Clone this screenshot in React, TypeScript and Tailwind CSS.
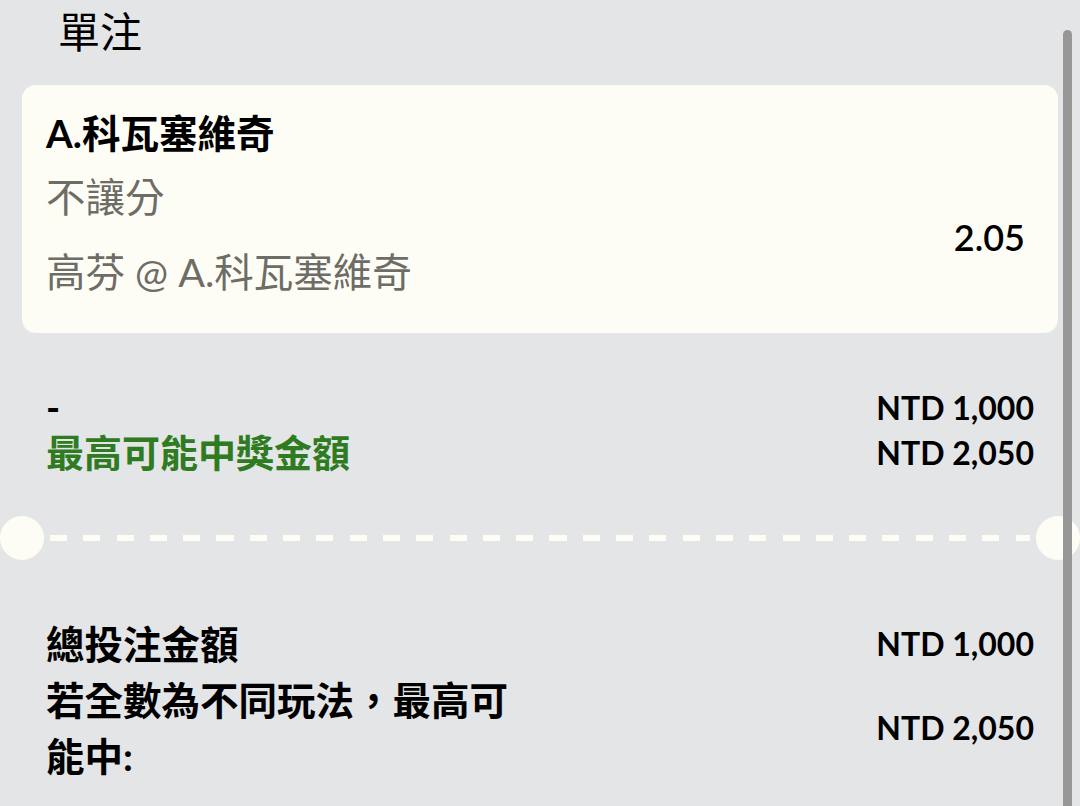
import React from "react"

const font = "font-['Lato','Noto_Sans_CJK_TC',sans-serif]"

const Ticket = () => (
  <div className="mx-[22px] mt-[21px] rounded-[14px] bg-[#fefdf5] pt-[24px] pb-[37px] pl-[24px] pr-[33px]">
    <div className="text-[38.5px] font-bold leading-[48px] text-black">A.科瓦塞維奇</div>
    <div className="mt-[16px] flex items-center justify-between">
      <div className="text-[39.5px] leading-[48px] text-[#6d6c66]">
        <div>不讓分</div>
        <div className="mt-[27px]">高芬 @ A.科瓦塞維奇</div>
      </div>
      <div className="mt-[4px] text-[36px] font-semibold leading-[48px] text-black">2.05</div>
    </div>
  </div>
)

const Divider = () => (
  <div className="mt-[41px] flex items-center">
    <div className="h-[44px] w-[44px] shrink-0 rounded-full bg-[#fefdf5]" />
    <div className="mx-[6px] h-[6px] flex-1 bg-[repeating-linear-gradient(90deg,#fefdf5_0_17px,transparent_17px_33.3px)]" />
    <div className="h-[44px] w-[44px] shrink-0 rounded-full bg-[#fefdf5]" />
  </div>
)

export default function App() {
  return (
    <div className={`relative h-[806px] w-[1080px] overflow-hidden bg-[#e4e5e7] ${font}`}>
      <div className="flex h-[64px] items-center pl-[58px] text-[42px] leading-none text-black">單注</div>
      <Ticket />

      <div className="mt-[52px] px-[46px] text-[38px] font-bold leading-[45px]">
        <div className="flex justify-between">
          <span className="text-black">-</span>
          <span className="text-[32px] text-black">NTD 1,000</span>
        </div>
        <div className="flex justify-between">
          <span className="text-[#2f7b21]">最高可能中獎金額</span>
          <span className="text-[32px] text-black">NTD 2,050</span>
        </div>
      </div>

      <Divider />

      <div className="mt-[56px] px-[46px] text-[38.5px] font-bold leading-[56px] text-black">
        <div className="flex justify-between">
          <span>總投注金額</span>
          <span className="text-[32px]">NTD 1,000</span>
        </div>
        <div className="flex items-center justify-between">
          <span className="w-[485px]">若全數為不同玩法，最高可能中:</span>
          <span className="text-[32px]">NTD 2,050</span>
        </div>
      </div>

      <div className="absolute right-[8px] top-[30px] bottom-0 w-[9px] rounded-t-full bg-[#979797]" />
    </div>
  )
}
